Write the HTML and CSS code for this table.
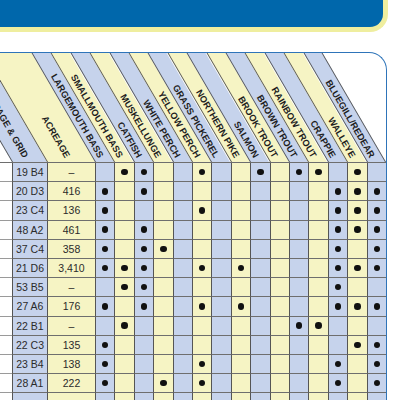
FILE: index.html
```html
<!DOCTYPE html>
<html lang="en">
<head>
  <meta charset="UTF-8" />
  <title>Lakes &amp; Fish</title>
  <link rel="stylesheet" href="styles.css">
</head>
<body>

<div class="banner"></div>

<div class="chart">
  <div class="head">
    <div></div>
    <div><span>PAGE &amp; GRID</span></div>
    <div><span>ACREAGE</span></div>
    <div><span>LARGEMOUTH BASS</span></div>
    <div><span>SMALLMOUTH BASS</span></div>
    <div><span>CATFISH</span></div>
    <div><span>MUSKELLUNGE</span></div>
    <div><span>WHITE PERCH</span></div>
    <div><span>YELLOW PERCH</span></div>
    <div><span>GRASS PICKEREL</span></div>
    <div><span>NORTHERN PIKE</span></div>
    <div><span>SALMON</span></div>
    <div><span>BROOK TROUT</span></div>
    <div><span>BROWN TROUT</span></div>
    <div><span>RAINBOW TROUT</span></div>
    <div><span>CRAPPIE</span></div>
    <div><span>WALLEYE</span></div>
    <div><span>BLUEGILL/REDEAR</span></div>
  </div>

  <div class="row"><span></span><span>19 B4</span><span>&ndash;</span><span></span><span class="dot"></span><span class="dot"></span><span></span><span></span><span class="dot"></span><span></span><span></span><span class="dot"></span><span></span><span class="dot"></span><span class="dot"></span><span></span><span class="dot"></span><span></span></div>
  <div class="row"><span></span><span>20 D3</span><span>416</span><span class="dot"></span><span></span><span class="dot"></span><span></span><span></span><span></span><span></span><span></span><span></span><span></span><span></span><span></span><span class="dot"></span><span class="dot"></span><span class="dot"></span></div>
  <div class="row"><span></span><span>23 C4</span><span>136</span><span class="dot"></span><span></span><span></span><span></span><span></span><span class="dot"></span><span></span><span></span><span></span><span></span><span></span><span></span><span class="dot"></span><span class="dot"></span><span class="dot"></span></div>
  <div class="row"><span></span><span>48 A2</span><span>461</span><span class="dot"></span><span></span><span class="dot"></span><span></span><span></span><span></span><span></span><span></span><span></span><span></span><span></span><span></span><span class="dot"></span><span class="dot"></span><span class="dot"></span></div>
  <div class="row"><span></span><span>37 C4</span><span>358</span><span class="dot"></span><span></span><span class="dot"></span><span class="dot"></span><span></span><span></span><span></span><span></span><span></span><span></span><span></span><span></span><span class="dot"></span><span></span><span class="dot"></span></div>
  <div class="row"><span></span><span>21 D6</span><span>3,410</span><span class="dot"></span><span class="dot"></span><span class="dot"></span><span></span><span></span><span class="dot"></span><span></span><span class="dot"></span><span></span><span></span><span></span><span></span><span class="dot"></span><span class="dot"></span><span class="dot"></span></div>
  <div class="row"><span></span><span>53 B5</span><span>&ndash;</span><span></span><span class="dot"></span><span class="dot"></span><span></span><span></span><span></span><span></span><span></span><span></span><span></span><span></span><span></span><span class="dot"></span><span></span><span></span></div>
  <div class="row"><span></span><span>27 A6</span><span>176</span><span class="dot"></span><span></span><span class="dot"></span><span></span><span></span><span class="dot"></span><span></span><span class="dot"></span><span></span><span></span><span></span><span></span><span class="dot"></span><span class="dot"></span><span class="dot"></span></div>
  <div class="row"><span></span><span>22 B1</span><span>&ndash;</span><span></span><span class="dot"></span><span></span><span></span><span></span><span></span><span></span><span></span><span></span><span></span><span class="dot"></span><span class="dot"></span><span></span><span></span><span></span></div>
  <div class="row"><span></span><span>22 C3</span><span>135</span><span class="dot"></span><span></span><span></span><span></span><span></span><span></span><span></span><span></span><span></span><span></span><span></span><span></span><span></span><span class="dot"></span><span class="dot"></span></div>
  <div class="row"><span></span><span>23 B4</span><span>138</span><span class="dot"></span><span></span><span></span><span></span><span></span><span class="dot"></span><span></span><span></span><span></span><span></span><span></span><span></span><span class="dot"></span><span></span><span class="dot"></span></div>
  <div class="row"><span></span><span>28 A1</span><span>222</span><span class="dot"></span><span></span><span></span><span class="dot"></span><span></span><span class="dot"></span><span></span><span></span><span></span><span></span><span></span><span></span><span class="dot"></span><span></span><span class="dot"></span></div>
  <div class="row"><span></span><span></span><span></span><span></span><span></span><span></span><span></span><span></span><span></span><span></span><span></span><span></span><span></span><span></span><span></span><span></span><span></span><span></span></div>
</div>

</body>
</html>
```

FILE: styles.css
```css
html, body {
  margin: 0;
  overflow: hidden;
  background: #fff;
}
body {
  font-family: "Liberation Sans", Arial, sans-serif;
  color: #2b2b2b;
}
.banner {
  width: 383px;
  height: 27px;
  background: #0067ab;
  border-right: 5px solid #efee9f;
  border-bottom: 5px solid #efee9f;
  border-bottom-right-radius: 18px;
}
.chart {
  margin-top: 20px;
  width: 386px;
  border-top: 1.5px solid #2e74b9;
  border-right: 1.5px solid #2e74b9;
  border-top-right-radius: 18px;
}
.head, .row {
  display: grid;
  grid-template-columns: 12px 35px 48px repeat(15, 1fr);
}
.head {
  height: 110px;
  box-sizing: border-box;
  border-bottom: 1px solid #6e6e6e;
}
.head > div {
  position: relative;
}
.head > div + div::before {
  content: "";
  position: absolute;
  top: 0;
  left: 0;
  right: 0;
  bottom: 0;
  border-left: 1px solid #555;
  transform: skewX(30.2deg);
  transform-origin: 0 100%;
}
.head > div:nth-child(even)::before {
  background: #c6d3ec;
}
.head > div:nth-child(odd)::before {
  background: #f6f4c4;
}
.head > div:last-child::before {
  border-right: 1px solid #555;
}
.head span {
  position: absolute;
  right: calc(50% + 4px);
  bottom: 0;
  z-index: 1;
  line-height: 10px;
  font-size: 9.3px;
  font-weight: bold;
  color: #1e1e1e;
  white-space: nowrap;
  transform-origin: 100% 50%;
  transform: rotate(59.8deg);
}
.row {
  height: 19.2px;
}
.row > span {
  display: flex;
  align-items: center;
  justify-content: center;
  box-sizing: border-box;
  border-left: 1px solid #555;
  border-bottom: 1px solid #6e6e6e;
  font-size: 10.5px;
}
.row > span:nth-child(even) {
  background: #c6d3ec;
}
.row > span:nth-child(odd) {
  background: #f6f4c4;
}
.row > span:first-child {
  background: #fff;
  border-left: 0;
  border-bottom-color: #9a9a9a;
}
.dot::after {
  content: "";
  width: 6.5px;
  height: 6.5px;
  border-radius: 50%;
  background: #111;
}
```
